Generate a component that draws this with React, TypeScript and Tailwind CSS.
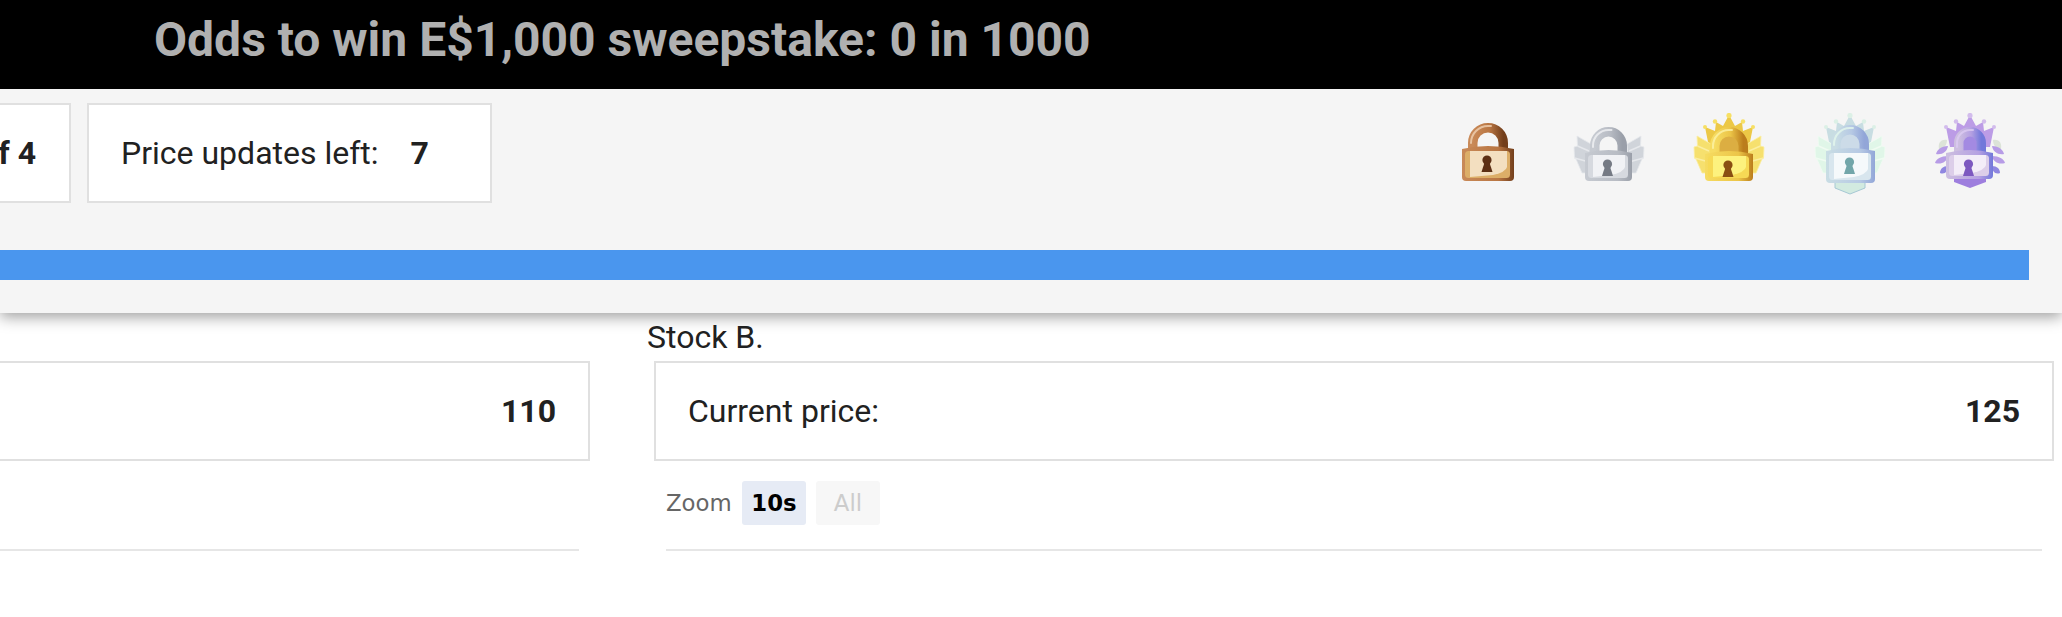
import type { ReactNode } from "react";

type LockColors = {
  light: string;
  left: string;
  mid: string;
  dark: string;
  plate: string;
  plateEdge: string;
  key: string;
  inner?: string;
};

type LockProps = {
  id: string;
  body: [number, number, number, number];
  shackle: [number, number, number];
  colors: LockColors;
  back?: ReactNode;
};

function Lock({ id, body, shackle, colors, back }: LockProps) {
  const [x1, y1, x2, y2] = body;
  const [sl, sr, st] = shackle;
  const w = x2 - x1;
  const h = y2 - y1;
  const cx = (x1 + x2) / 2 - 1;
  const r = (sr - sl) / 2;
  const px = x1 + 3;
  const py = y1 + 5;
  const pw = w - 7;
  const ph = h - 8;
  return (
    <svg width="80" height="82" viewBox="0 0 80 82" className="shrink-0">
      <defs>
        <linearGradient id={`${id}-b`} x1="0" x2="1" y1="0" y2="0">
          <stop offset="0" stopColor={colors.left} />
          <stop offset="0.7" stopColor={colors.mid} />
          <stop offset="1" stopColor={colors.dark} />
        </linearGradient>
        <linearGradient id={`${id}-s`} x1="0" x2="1" y1="0" y2="0">
          <stop offset="0" stopColor={colors.left} />
          <stop offset="0.55" stopColor={colors.mid} />
          <stop offset="1" stopColor={colors.dark} />
        </linearGradient>
      </defs>
      {back}
      {colors.inner && <rect x={sl + 6} y={st + 5} width={2 * r - 12} height={y1 - st} rx="9" fill={colors.inner} />}
      <path
        d={`M${sl + 4.75} ${y1 + 6} V${st + r} a${r - 4.75} ${r - 4.75} 0 0 1 ${2 * r - 9.5} 0 V${y1 + 6}`}
        fill="none"
        stroke={`url(#${id}-s)`}
        strokeWidth="9.5"
      />
      <path
        d={`M${sl + 3} ${y1 - 3} V${st + r} a${r - 3} ${r - 3} 0 0 1 ${r - 3} ${3 - r} h3`}
        fill="none"
        stroke={colors.light}
        strokeWidth="2"
        strokeLinecap="round"
        opacity="0.8"
      />
      <path
        d={`M${x1} ${y1 + 3} Q${x1 + w / 2} ${y1 - 3} ${x2} ${y1 + 3} V${y2 - 4} a4 4 0 0 1 -4 4 H${x1 + 4} a4 4 0 0 1 -4 -4 Z`}
        fill={`url(#${id}-b)`}
      />
      <rect x={px} y={py} width={pw} height={ph} rx="3.5" fill={colors.plateEdge} />
      <path
        d={`M${px + 5} ${py} H${px + pw - 3} V${py + ph - 11} Q${px + pw - 4} ${py + ph - 6} ${px + pw - 17} ${py + ph - 3} L${px + 5} ${py + ph - 1} Z`}
        fill={colors.plate}
      />
      <circle cx={cx} cy={y1 + 14} r="4.6" fill={colors.key} />
      <path d={`M${cx - 2} ${y1 + 15} L${cx - 5.5} ${y1 + 26} H${cx + 5.5} L${cx + 2} ${y1 + 15} Z`} fill={colors.key} />
    </svg>
  );
}

function Wings({ fill, edge }: { fill: string; edge: string }) {
  return (
    <g fill={fill} stroke={edge} strokeWidth="0.8" strokeLinejoin="round">
      <path d="M22 31 L8 23 L8.5 33 L5 34 L5.5 45 L7 46 L13 60 L20 60 Z" />
      <path d="M58 31 L72 23 L71.5 33 L75 34 L74.5 45 L73 46 L67 60 L60 60 Z" />
      <path d="M8.5 33 L20 38 M5.5 45 L20 49 M71.5 33 L60 38 M74.5 45 L60 49" fill="none" strokeWidth="1.5" />
    </g>
  );
}

function Crown({ fill, edge }: { fill: string; edge?: string }) {
  return (
    <g fill={fill}>
      <path d="M40 2 L46 13 L53 9 L54 18 L64 14 L60 34 H20 L16 14 L26 18 L27 9 L34 13 Z" />
      <circle cx="40" cy="2.5" r="2.6" fill={edge ?? fill} />
      <circle cx="26" cy="8.5" r="2.2" fill={edge ?? fill} />
      <circle cx="54" cy="8.5" r="2.2" fill={edge ?? fill} />
      <circle cx="16" cy="14" r="2" fill={edge ?? fill} />
      <circle cx="64" cy="14" r="2" fill={edge ?? fill} />
    </g>
  );
}

function Laurel() {
  return (
    <g>
      <path d="M17 27 C10 26 8 31 9 36 C14 36 17 32 17 27 Z M63 27 C70 26 72 31 71 36 C66 36 63 32 63 27 Z" fill="#dce3d8" />
      <g fill="#b79ce6">
        <path d="M18 33 C11 33 7 37 6 41 C12 42 17 39 18 33 Z" />
        <path d="M62 33 C69 33 73 37 74 41 C68 42 63 39 62 33 Z" />
        <path d="M18 43 C11 43 6 46 5 50 C11 52 17 49 18 43 Z" />
        <path d="M62 43 C69 43 74 46 75 50 C69 52 63 49 62 43 Z" />
      </g>
      <g fill="#8f86e0">
        <path d="M18 53 C13 53 10 56 10 60 C15 62 18 58 18 53 Z" />
        <path d="M62 53 C67 53 70 56 70 60 C65 62 62 58 62 53 Z" />
      </g>
    </g>
  );
}

function InfoBox({ children, className }: { children: ReactNode; className?: string }) {
  return <div className={`flex h-[100px] items-center border-2 border-[#e0e0e0] bg-white ${className ?? ""}`}>{children}</div>;
}

function ZoomRow() {
  return (
    <div className="flex h-[44px] items-center font-['DejaVu_Sans',sans-serif] text-[22.8px]">
      <span className="w-[76px] text-[#666666]">Zoom</span>
      <span className="flex h-[44px] w-[64px] items-center justify-center rounded-[3px] bg-[#e6ebf5] font-bold text-black">10s</span>
      <span className="ml-[10px] flex h-[44px] w-[64px] items-center justify-center rounded-[3px] bg-[#f7f7f7] text-[#cccccc]">All</span>
    </div>
  );
}

export default function App() {
  return (
    <div className="h-[617px] overflow-hidden bg-white font-['Roboto',sans-serif] text-[32px] text-[#212121]">
      <div className="relative z-10 shadow-[0_4px_14px_rgba(0,0,0,0.38)]">
        <div className="flex h-[89px] items-center bg-black pb-[10px] pl-[154px] text-[48px] font-bold text-[#b0b0b0]">
          Odds to win E$1,000 sweepstake: 0 in 1000
        </div>
        <div className="h-[224px] bg-[#f5f5f5] pt-[14px]">
          <div className="flex h-[100px] items-center">
            <InfoBox className="w-[71px] justify-end border-l-0 pr-[33px] font-bold whitespace-nowrap">of 4</InfoBox>
            <InfoBox className="ml-[16px] w-[405px] pl-[32px]">
              <span>Price updates left:</span>
              <span className="ml-[32px] font-bold">7</span>
            </InfoBox>
            <div className="ml-auto flex items-center gap-[40.5px] pr-[52px] pt-[2px]">
              <Lock
                id="bronze"
                body={[14, 33, 66, 68]}
                shackle={[20, 60, 10]}
                colors={{ light: "#f0d2b4", left: "#c98a58", mid: "#b97643", dark: "#733f1c", plate: "#f3dfc0", plateEdge: "#dcae68", key: "#5c2f14" }}
              />
              <Lock
                id="silver"
                body={[16, 37, 63, 68]}
                shackle={[21, 58, 14]}
                colors={{ light: "#f0f1f4", left: "#c6cad1", mid: "#b8bcc4", dark: "#9a9fa9", plate: "#f1f2f5", plateEdge: "#d6d9df", key: "#757a84" }}
                back={<Wings fill="#d0d4da" edge="#e6e8ec" />}
              />
              <Lock
                id="gold"
                body={[16, 38, 64, 68]}
                shackle={[21, 59, 14]}
                colors={{ light: "#fdf3a6", left: "#f6dc62", mid: "#ecc548", dark: "#bb7d1c", plate: "#fdf27e", plateEdge: "#f6d955", key: "#8a4f12", inner: "#dcae42" }}
                back={
                  <>
                    <Crown fill="#ecc846" edge="#f7e064" />
                    <Wings fill="#f6e06e" edge="#fbeea0" />
                  </>
                }
              />
              <Lock
                id="diamond"
                body={[16, 35, 65, 70]}
                shackle={[21, 59, 12]}
                colors={{ light: "#e4f7ec", left: "#c9dde4", mid: "#b6c9e4", dark: "#92a6d8", plate: "#f5f9fb", plateEdge: "#d8e6ee", key: "#72a6aa", inner: "#ccdbe8" }}
                back={
                  <>
                    <Crown fill="#c8dde2" edge="#dcf0e6" />
                    <Wings fill="#e0f6e8" edge="#f0fbf2" />
                    <path d="M25 68 V75 L40 81 L55 75 V68 Z" fill="#d2eae0" stroke="#a6c8d4" strokeWidth="1" />
                  </>
                }
              />
              <Lock
                id="purple"
                body={[16, 37, 63, 66]}
                shackle={[24, 56, 14]}
                colors={{ light: "#dccbf2", left: "#cdbfe0", mid: "#b5a0e2", dark: "#7278da", plate: "#f3edf8", plateEdge: "#dccee9", key: "#7d58c0", inner: "#a38ae2" }}
                back={
                  <>
                    <Crown fill="#bc9ce6" edge="#d2bcec" />
                    <Laurel />
                    <path d="M24 62 V69 L40 75 L56 69 V62 Z" fill="#9e7ede" />
                  </>
                }
              />
            </div>
          </div>
          <div className="mt-[47px] mr-[33px] h-[30px] bg-[#4a96ee]" />
        </div>
      </div>

      <div className="flex">
        <div className="w-[647px] shrink-0">
          <div className="h-[48px]" />
          <InfoBox className="mr-[57px] justify-end border-l-0 pr-[32px] font-bold">110</InfoBox>
          <div className="mt-[20px] h-[44px]" />
          <div className="mt-[24px] mr-[68px] h-[2px] bg-[#e6e6e6]" />
        </div>
        <div className="flex-1">
          <div className="flex h-[48px] items-center">Stock B.</div>
          <InfoBox className="mr-[8px] ml-[7px] justify-between pr-[32px] pl-[32px]">
            <span>Current price:</span>
            <span className="font-bold">125</span>
          </InfoBox>
          <div className="mt-[20px] ml-[19px]">
            <ZoomRow />
          </div>
          <div className="mt-[24px] mr-[20px] ml-[19px] h-[2px] bg-[#e6e6e6]" />
        </div>
      </div>
    </div>
  );
}
